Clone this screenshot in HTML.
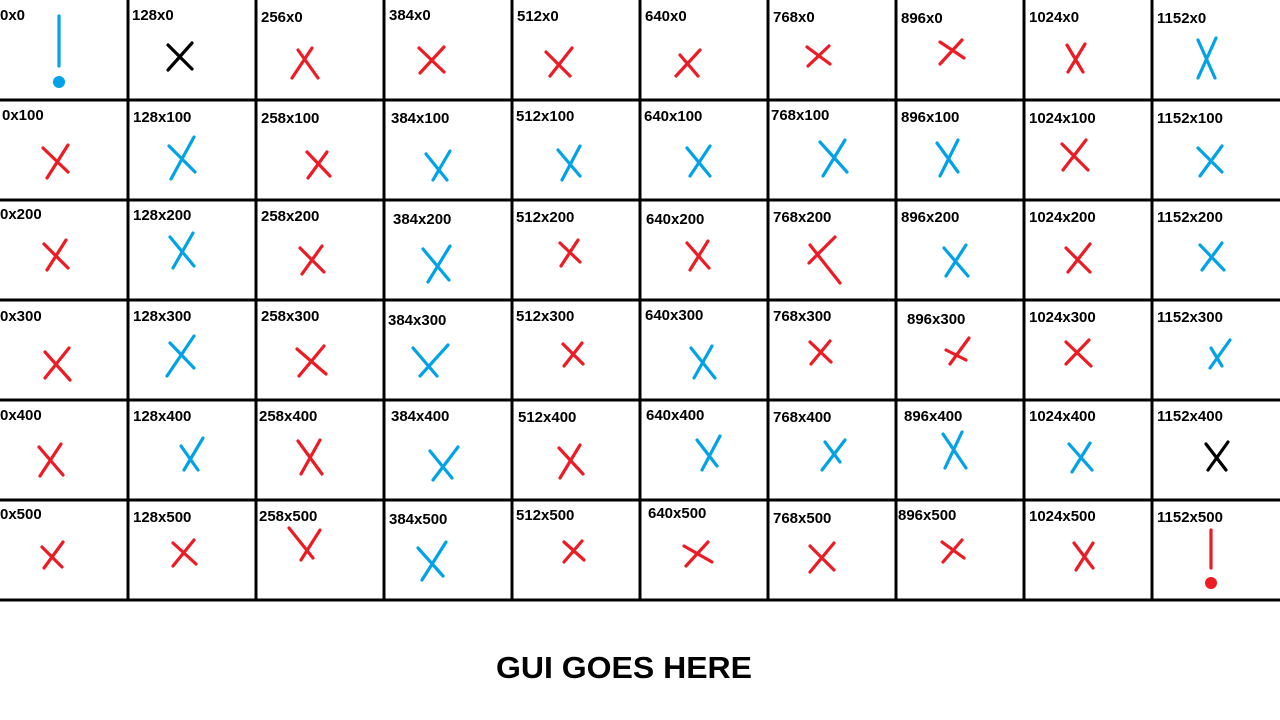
<!DOCTYPE html>
<html><head><meta charset="utf-8"><style>
html,body{margin:0;padding:0;background:#fff;width:1280px;height:720px;overflow:hidden}
svg{display:block}
text{font-family:"Liberation Sans",sans-serif;font-weight:bold;font-size:15px;fill:#000}
.r{stroke:#ed1c24}.b{stroke:#00a2e8}.k{stroke:#000}
g path{stroke-width:3.2;fill:none;stroke-linecap:round}
</style></head><body>
<svg width="1280" height="720" viewBox="0 0 1280 720">
<g stroke="#000" stroke-width="3">
<line x1="128" y1="0" x2="128" y2="600"/><line x1="256" y1="0" x2="256" y2="600"/><line x1="384" y1="0" x2="384" y2="600"/><line x1="512" y1="0" x2="512" y2="600"/><line x1="640" y1="0" x2="640" y2="600"/><line x1="768" y1="0" x2="768" y2="600"/><line x1="896" y1="0" x2="896" y2="600"/><line x1="1024" y1="0" x2="1024" y2="600"/><line x1="1152" y1="0" x2="1152" y2="600"/>
<line x1="0" y1="100" x2="1280" y2="100"/><line x1="0" y1="200" x2="1280" y2="200"/><line x1="0" y1="300" x2="1280" y2="300"/><line x1="0" y1="400" x2="1280" y2="400"/><line x1="0" y1="500" x2="1280" y2="500"/><line x1="0" y1="600" x2="1280" y2="600"/>
</g>
<text x="0" y="20">0x0</text><text x="132" y="20">128x0</text><text x="261" y="22">256x0</text><text x="389" y="20">384x0</text><text x="517" y="21">512x0</text><text x="645" y="21">640x0</text><text x="773" y="22">768x0</text><text x="901" y="23">896x0</text><text x="1029" y="22">1024x0</text><text x="1157" y="23">1152x0</text>
<text x="2" y="120">0x100</text><text x="133" y="122">128x100</text><text x="261" y="123">258x100</text><text x="391" y="123">384x100</text><text x="516" y="121">512x100</text><text x="644" y="121">640x100</text><text x="771" y="120">768x100</text><text x="901" y="122">896x100</text><text x="1029" y="123">1024x100</text><text x="1157" y="123">1152x100</text>
<text x="0" y="219">0x200</text><text x="133" y="220">128x200</text><text x="261" y="221">258x200</text><text x="393" y="224">384x200</text><text x="516" y="222">512x200</text><text x="646" y="224">640x200</text><text x="773" y="222">768x200</text><text x="901" y="222">896x200</text><text x="1029" y="222">1024x200</text><text x="1157" y="222">1152x200</text>
<text x="0" y="321">0x300</text><text x="133" y="321">128x300</text><text x="261" y="321">258x300</text><text x="388" y="325">384x300</text><text x="516" y="321">512x300</text><text x="645" y="320">640x300</text><text x="773" y="321">768x300</text><text x="907" y="324">896x300</text><text x="1029" y="322">1024x300</text><text x="1157" y="322">1152x300</text>
<text x="0" y="420">0x400</text><text x="133" y="421">128x400</text><text x="259" y="421">258x400</text><text x="391" y="421">384x400</text><text x="518" y="422">512x400</text><text x="646" y="420">640x400</text><text x="773" y="422">768x400</text><text x="904" y="421">896x400</text><text x="1029" y="421">1024x400</text><text x="1157" y="421">1152x400</text>
<text x="0" y="519">0x500</text><text x="133" y="522">128x500</text><text x="259" y="521">258x500</text><text x="389" y="524">384x500</text><text x="516" y="520">512x500</text><text x="648" y="518">640x500</text><text x="773" y="523">768x500</text><text x="898" y="520">896x500</text><text x="1029" y="521">1024x500</text><text x="1157" y="522">1152x500</text>
<g>
<path class="b" d="M59 16V66" stroke-width="4"/><circle cx="59" cy="82" r="6" fill="#00a2e8"/>
<path class="k" d="M168 45L192 69M192 43L168 70"/>
<path class="r" d="M292 78L312 48M298 50L318 78"/>
<path class="r" d="M419 48L444 72M444 47L420 73"/>
<path class="r" d="M546 52L570 76M572 48L550 76"/>
<path class="r" d="M676 76L700 50M680 55L698 76"/>
<path class="r" d="M807 47L830 64M829 46L808 66"/>
<path class="r" d="M940 42L964 58M962 40L940 64"/>
<path class="r" d="M1067 45L1083 72M1085 44L1068 72"/>
<path class="b" d="M1198 40L1215 78M1216 38L1198 78"/>

<path class="r" d="M43 148L68 172M68 145L47 178"/>
<path class="b" d="M169 146L195 172M194 137L171 179"/>
<path class="r" d="M307 152L330 176M327 152L308 178"/>
<path class="b" d="M426 154L447 180M450 151L433 180"/>
<path class="b" d="M558 150L580 176M580 146L562 180"/>
<path class="b" d="M687 148L710 176M710 146L690 176"/>
<path class="b" d="M820 142L847 172M845 140L823 176"/>
<path class="b" d="M937 143L958 172M958 140L940 176"/>
<path class="r" d="M1062 144L1088 170M1086 140L1063 170"/>
<path class="b" d="M1198 148L1222 172M1222 146L1200 176"/>

<path class="r" d="M44 244L68 268M66 240L47 270"/>
<path class="b" d="M170 237L194 266M193 233L173 268"/>
<path class="r" d="M300 248L324 272M322 246L302 274"/>
<path class="b" d="M423 249L449 280M450 246L428 282"/>
<path class="r" d="M560 243L580 262M578 240L561 266"/>
<path class="r" d="M687 243L709 268M708 241L690 270"/>
<path class="r" d="M809 263L835 237M810 245L840 283"/>
<path class="b" d="M944 248L968 276M966 245L946 276"/>
<path class="r" d="M1066 248L1090 272M1090 244L1068 272"/>
<path class="b" d="M1200 245L1224 270M1222 243L1202 270"/>

<path class="r" d="M45 352L70 380M69 348L45 378"/>
<path class="b" d="M170 343L194 368M194 336L167 376"/>
<path class="r" d="M297 349L326 374M324 346L299 376"/>
<path class="b" d="M413 348L437 376M448 345L420 376"/>
<path class="r" d="M563 344L583 364M582 343L564 366"/>
<path class="b" d="M691 348L715 378M712 346L694 378"/>
<path class="r" d="M810 342L831 362M830 341L811 364"/>
<path class="r" d="M946 350L966 360M969 338L950 364"/>
<path class="r" d="M1066 342L1091 366M1089 340L1066 364"/>
<path class="b" d="M1211 348L1222 366M1230 340L1210 368"/>

<path class="r" d="M39 447L63 475M61 444L40 476"/>
<path class="b" d="M181 446L198 470M203 438L184 470"/>
<path class="r" d="M298 441L322 474M320 440L301 474"/>
<path class="b" d="M430 451L452 478M458 447L433 480"/>
<path class="r" d="M559 448L583 474M580 445L560 478"/>
<path class="b" d="M697 440L717 466M720 436L702 470"/>
<path class="b" d="M825 442L840 462M845 440L822 470"/>
<path class="b" d="M943 434L966 468M962 432L945 468"/>
<path class="b" d="M1069 444L1092 470M1090 443L1072 472"/>
<path class="k" d="M1206 444L1226 470M1228 442L1208 470"/>

<path class="r" d="M42 547L62 567M63 542L44 568"/>
<path class="r" d="M173 543L196 564M194 540L173 566"/>
<path class="r" d="M289 528L313 558M320 530L301 560"/>
<path class="b" d="M418 548L443 576M446 542L422 580"/>
<path class="r" d="M564 542L584 560M582 541L564 562"/>
<path class="r" d="M684 546L712 562M708 542L686 566"/>
<path class="r" d="M810 546L834 570M834 543L810 572"/>
<path class="r" d="M942 542L964 558M962 540L943 562"/>
<path class="r" d="M1074 543L1093 568M1093 543L1076 570"/>
<path class="r" d="M1211 530V568" stroke-width="4"/><circle cx="1211" cy="583" r="6" fill="#ed1c24"/>
</g>
<text x="496" y="678" style="font-size:31px" textLength="256" lengthAdjust="spacingAndGlyphs">GUI GOES HERE</text>
</svg>
</body></html>
